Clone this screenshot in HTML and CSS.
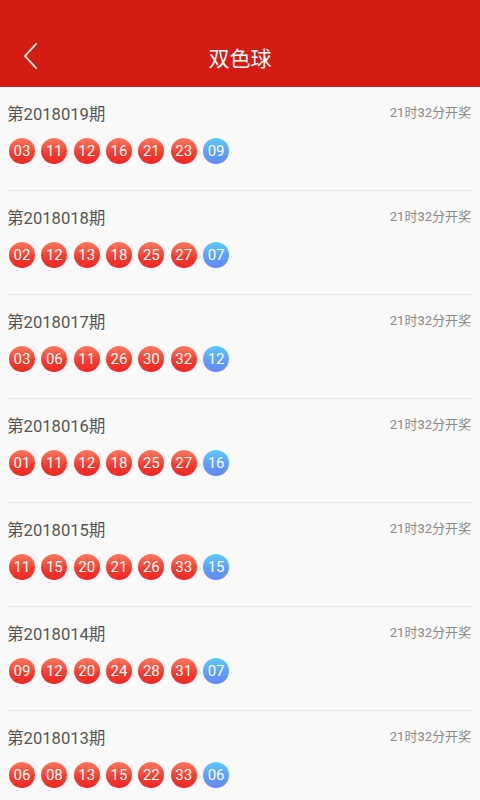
FILE: index.html
```html
<!DOCTYPE html>
<html lang="zh">
<head>
<meta charset="utf-8">
<link rel="stylesheet" href="styles.css">
</head>
<body>
<header class="bar">
  <svg class="back" width="16" height="26" viewBox="0 0 16 26"><path d="M13 1 L2 13 L13 25" fill="none" stroke="#fff" stroke-width="1.8" stroke-linecap="round" stroke-linejoin="round"/></svg>
  <div class="title">双色球</div>
</header>
<main class="list">
  <div class="item">
    <div class="top"><span class="period">第2018019期</span><span class="time">21时32分开奖</span></div>
    <div class="balls"><span class="ball">03</span><span class="ball">11</span><span class="ball">12</span><span class="ball">16</span><span class="ball">21</span><span class="ball">23</span><span class="ball blue">09</span></div>
  </div>
  <div class="item">
    <div class="top"><span class="period">第2018018期</span><span class="time">21时32分开奖</span></div>
    <div class="balls"><span class="ball">02</span><span class="ball">12</span><span class="ball">13</span><span class="ball">18</span><span class="ball">25</span><span class="ball">27</span><span class="ball blue">07</span></div>
  </div>
  <div class="item">
    <div class="top"><span class="period">第2018017期</span><span class="time">21时32分开奖</span></div>
    <div class="balls"><span class="ball">03</span><span class="ball">06</span><span class="ball">11</span><span class="ball">26</span><span class="ball">30</span><span class="ball">32</span><span class="ball blue">12</span></div>
  </div>
  <div class="item">
    <div class="top"><span class="period">第2018016期</span><span class="time">21时32分开奖</span></div>
    <div class="balls"><span class="ball">01</span><span class="ball">11</span><span class="ball">12</span><span class="ball">18</span><span class="ball">25</span><span class="ball">27</span><span class="ball blue">16</span></div>
  </div>
  <div class="item">
    <div class="top"><span class="period">第2018015期</span><span class="time">21时32分开奖</span></div>
    <div class="balls"><span class="ball">11</span><span class="ball">15</span><span class="ball">20</span><span class="ball">21</span><span class="ball">26</span><span class="ball">33</span><span class="ball blue">15</span></div>
  </div>
  <div class="item">
    <div class="top"><span class="period">第2018014期</span><span class="time">21时32分开奖</span></div>
    <div class="balls"><span class="ball">09</span><span class="ball">12</span><span class="ball">20</span><span class="ball">24</span><span class="ball">28</span><span class="ball">31</span><span class="ball blue">07</span></div>
  </div>
  <div class="item">
    <div class="top"><span class="period">第2018013期</span><span class="time">21时32分开奖</span></div>
    <div class="balls"><span class="ball">06</span><span class="ball">08</span><span class="ball">13</span><span class="ball">15</span><span class="ball">22</span><span class="ball">33</span><span class="ball blue">06</span></div>
  </div>
</main>
</body>
</html>
```
FILE: styles.css
```css
* { box-sizing: border-box; }
html, body { margin: 0; padding: 0; }
body {
  width: 480px;
  height: 800px;
  overflow: hidden;
  background: #fafafa;
  font-family: Roboto, "Noto Sans CJK SC", sans-serif;
}
.bar {
  height: 87px;
  background: #d31c14;
  position: relative;
  display: flex;
  align-items: flex-end;
  justify-content: center;
  padding-bottom: 16px;
}
.back {
  position: absolute;
  left: 23px;
  top: 43px;
}
.title {
  color: #fff;
  font-size: 21px;
  line-height: 28px;
  font-family: "Noto Sans CJK SC", sans-serif;
}
.list {
  padding: 0 9px 0 7px;
}
.item {
  padding: 18px 0 26px;
  border-bottom: 1px solid #e6e6e6;
}
.top {
  display: flex;
  justify-content: space-between;
  align-items: flex-start;
  height: 20px;
  margin-bottom: 13px;
}
.period {
  font-size: 16.6px;
  line-height: 20px;
  color: #555;
}
.time {
  font-size: 13px;
  line-height: 16px;
  color: #8a8a8a;
}
.balls {
  display: flex;
  gap: 6.35px;
  margin-left: 2px;
}
.ball {
  width: 26px;
  height: 26px;
  border-radius: 50%;
  background: linear-gradient(to bottom, #ff7a5c 0%, #f23a2e 60%, #ee2a24 100%);
  color: #fff;
  font-size: 15px;
  line-height: 26px;
  text-align: center;
}
.ball.blue {
  background: linear-gradient(to bottom, #5ccafb 0%, #5f9cf7 60%, #6386f4 100%);
}
```
